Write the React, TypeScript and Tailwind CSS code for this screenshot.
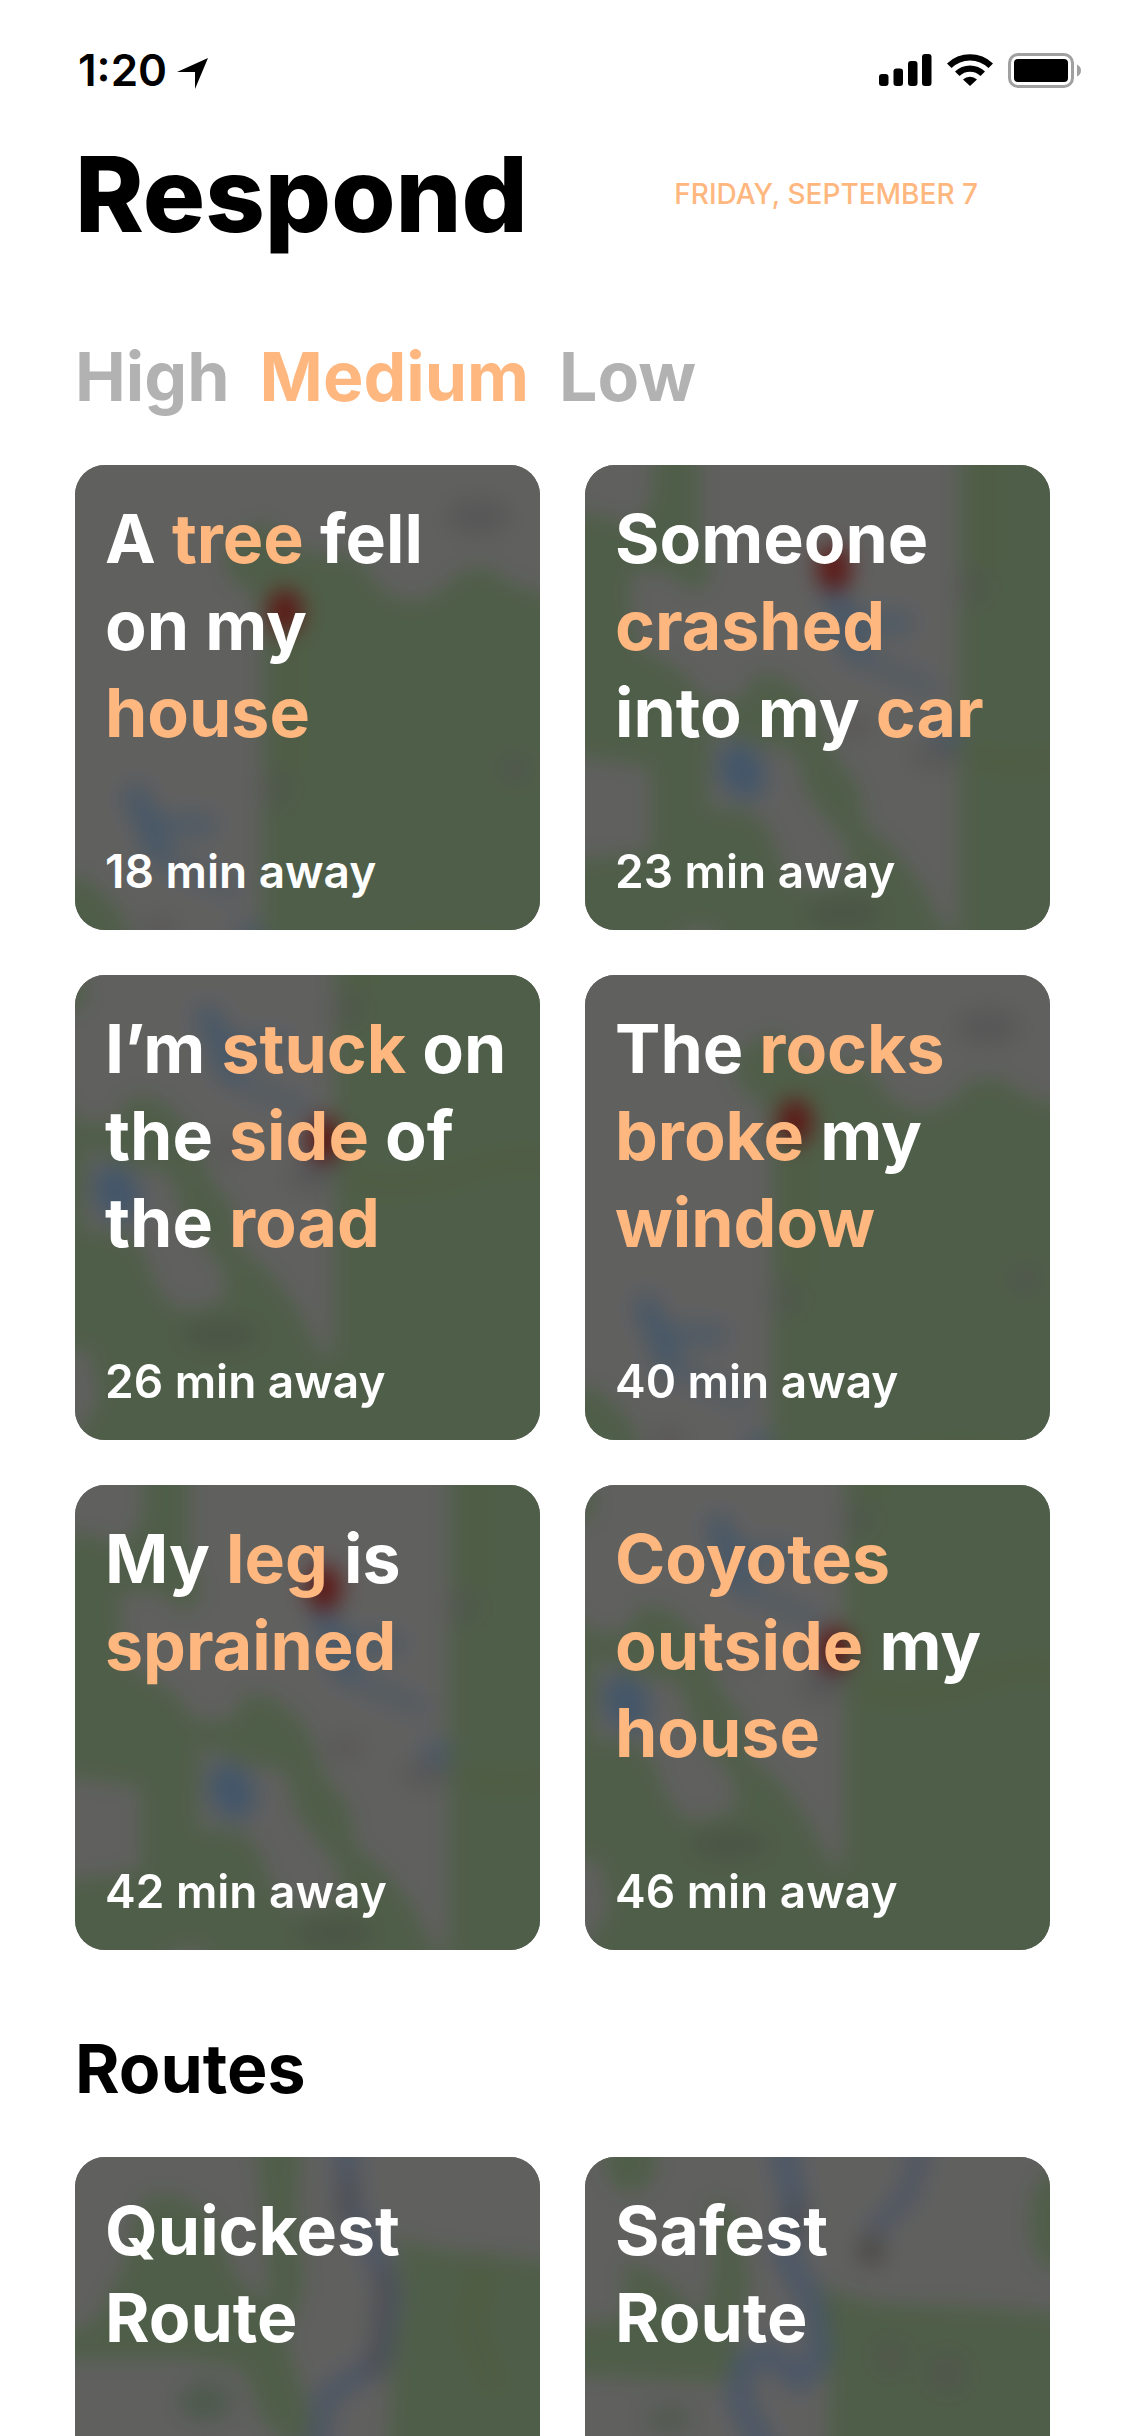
import React from 'react';

type Terrain = 'ridge' | 'valley' | 'canyon' | 'quickest' | 'safest';

interface Word {
  text: string;
  accent?: boolean;
}

interface Incident {
  lines: Word[][];
  minutes: number;
  terrain: Terrain;
}

const priorities = ['High', 'Medium', 'Low'];

const incidents: Incident[] = [
  {
    lines: [
      [{ text: 'A ' }, { text: 'tree', accent: true }, { text: ' fell' }],
      [{ text: 'on my' }],
      [{ text: 'house', accent: true }],
    ],
    minutes: 18,
    terrain: 'ridge',
  },
  {
    lines: [
      [{ text: 'Someone' }],
      [{ text: 'crashed', accent: true }],
      [{ text: 'into my ' }, { text: 'car', accent: true }],
    ],
    minutes: 23,
    terrain: 'valley',
  },
  {
    lines: [
      [{ text: 'I’m ' }, { text: 'stuck', accent: true }, { text: ' on' }],
      [{ text: 'the ' }, { text: 'side', accent: true }, { text: ' of' }],
      [{ text: 'the ' }, { text: 'road', accent: true }],
    ],
    minutes: 26,
    terrain: 'canyon',
  },
  {
    lines: [
      [{ text: 'The ' }, { text: 'rocks', accent: true }],
      [{ text: 'broke', accent: true }, { text: ' my' }],
      [{ text: 'window', accent: true }],
    ],
    minutes: 40,
    terrain: 'ridge',
  },
  {
    lines: [
      [{ text: 'My ' }, { text: 'leg', accent: true }, { text: ' is' }],
      [{ text: 'sprained', accent: true }],
    ],
    minutes: 42,
    terrain: 'valley',
  },
  {
    lines: [
      [{ text: 'Coyotes', accent: true }],
      [{ text: 'outside', accent: true }, { text: ' my' }],
      [{ text: 'house', accent: true }],
    ],
    minutes: 46,
    terrain: 'canyon',
  },
];

const GREEN = '#4f5e48';
const GRAY = '#60605f';
const BLUE = '#43566a';

const area = (
  <>
    <path
      fill={GREEN}
      d="M374 600V-45L365-72 339-90 336-125 379-147 405-117 472-110 492-77 525-64 555-77 572-97 602-100 622-84 700-60V600Z"
    />
    <path
      fill={GREEN}
      d="M-40 44 20 50 50 62 68 30V-30H114V60L128 115 108 128 85 108 48 105 44 125 52 180 100 208 120 236 160 234 166 208 200 212 232 242 250 292 275 322 280 362 305 380 336 418 362 470 400 470V600H-40V398L66 386V302L-40 288Z"
    />
    <path fill={GRAY} d="M126 258 160 276 210 286 222 330 262 380 268 412 220 425 196 400 184 362 160 344 122 344Z" />
    <path fill={GRAY} d="M90 468 128 460 140 510 110 560H90Z" />
    <path fill="none" stroke={BLUE} strokeWidth="24" strokeLinecap="round" opacity="0.85" d="M248 130 262 160 270 184" />
    <path fill="none" stroke={BLUE} strokeWidth="22" strokeLinecap="round" opacity="0.6" d="M274 158H318" />
    <path fill="none" stroke={BLUE} strokeWidth="18" strokeLinecap="round" opacity="0.45" d="M275 192 320 212 345 222" />
    <ellipse cx="157" cy="306" rx="22" ry="29" fill={BLUE} transform="rotate(-25 157 306)" />
    <circle cx="362" cy="270" r="16" fill={BLUE} opacity="0.6" />
    <ellipse cx="350" cy="290" rx="24" ry="14" fill="#505050" opacity="0.5" />
    <ellipse cx="388" cy="122" rx="16" ry="16" fill="#505050" opacity="0.5" />
    <ellipse cx="270" cy="262" rx="18" ry="12" fill="#525050" opacity="0.5" />
    <ellipse cx="260" cy="448" rx="40" ry="14" fill="#4a5146" opacity="0.8" />
    <ellipse cx="590" cy="-150" rx="32" ry="18" fill="#525151" opacity="0.6" />
    <ellipse cx="627" cy="102" rx="16" ry="12" fill="#505550" />
    <path fill="none" stroke="#505a3c" strokeWidth="12" opacity="0.5" d="M400-30V100M385 290Q440 310 520 280T700 340" />
  </>
);

const quickestArea = (
  <>
    <path fill={GREEN} d="M180-20H226L222 60 230 130 210 180 225 225 245 290H215L185 260 170 212 110 202H-20V178L20 166 48 110 66 40 100 36 140 60 160 120 195 150 190 70Z" />
    <path fill={GREEN} d="M322 74 350 90 410 96 500 108V500H300L318 200 328 140Z" />
    <path fill="none" stroke="#4e5a3e" strokeWidth="14" opacity="0.6" d="M410 100 395 170 420 230" />
    <ellipse cx="130" cy="245" rx="28" ry="20" fill="#4e5a4d" />
    <path fill="none" stroke="#4a5566" strokeWidth="22" opacity="0.85" d="M270-20 274 50 298 90 316 136 306 203 250 240 240 300" />
    <path fill="none" stroke="#484a4c" strokeWidth="16" opacity="0.7" d="M272 20 270 66M312 110 300 220" />
  </>
);

const safestArea = (
  <>
    <ellipse cx="46" cy="6" rx="26" ry="30" fill={GREEN} />
    <path fill={GREEN} d="M40 100 90 130 118 170 130 110 122 40 150 50 165 130 150 180 160 222 120 226-20 218V170L40 160Z" />
    <path fill={GREEN} d="M230 128 290 146 400 150 500 158V500H236L245 220Z" />
    <ellipse cx="470" cy="64" rx="26" ry="50" fill={GREEN} />
    <ellipse cx="362" cy="216" rx="20" ry="20" fill="#50564c" />
    <ellipse cx="306" cy="200" rx="16" ry="16" fill="#50564c" />
    <ellipse cx="84" cy="262" rx="26" ry="16" fill="#535b51" />
    <path fill="none" stroke="#475569" strokeWidth="22" opacity="0.9" d="M196-20 211 56 200 96 230 150 236 200 214 222 185 196 158 206 154 243 184 300" />
    <path fill="none" stroke="#4a5364" strokeWidth="18" opacity="0.85" d="M340-20 322 40 286 76" />
    <ellipse cx="286" cy="94" rx="12" ry="15" fill="#484642" />
    <ellipse cx="212" cy="62" rx="10" ry="20" fill="#48494e" opacity="0.8" />
  </>
);

const terrains = {
  ridge: { shift: 'translate(-187 202)', pin: [210, 147], shapes: area },
  valley: { shift: 'translate(0 0)', pin: [249, 103], shapes: area },
  canyon: { shift: 'translate(-115 -88)', pin: [249, 165], shapes: area },
  quickest: { shift: 'translate(0 0)', pin: null, shapes: quickestArea },
  safest: { shift: 'translate(0 0)', pin: null, shapes: safestArea },
};

const BlurredMap = ({ terrain }: { terrain: Terrain }) => {
  const id = React.useId();
  const { shift, pin, shapes } = terrains[terrain];

  return (
    <svg viewBox="0 0 465 465" preserveAspectRatio="xMidYMid slice" className="absolute inset-0 h-full w-full" aria-hidden="true">
      <filter id={id} filterUnits="userSpaceOnUse" x="-40" y="-40" width="545" height="545" colorInterpolationFilters="sRGB">
        <feGaussianBlur stdDeviation="11" />
      </filter>
      <rect width="465" height="465" fill={GRAY} />
      <g filter={`url(#${id})`}>
        <rect x="-60" y="-60" width="585" height="585" fill={GRAY} />
        <g transform={shift}>{shapes}</g>
        {pin && <ellipse cx={pin[0]} cy={pin[1]} rx="17" ry="23" fill="#5c1613" />}
      </g>
    </svg>
  );
};

interface MapCardProps {
  lines: Word[][];
  footer?: string;
  terrain: Terrain;
}

const MapCard = ({ lines, footer, terrain }: MapCardProps) => (
  <a href="#" className="relative flex aspect-square flex-col justify-between overflow-hidden rounded-[30px] p-[30px] text-white">
    <BlurredMap terrain={terrain} />
    <h3 className="relative text-[68px] leading-[87px] font-bold whitespace-nowrap">
      {lines.map((words, i) => (
        <span key={i} className="block">
          {words.map((word) => (
            <span key={word.text} className={word.accent ? 'text-[#ffb780]' : ''}>
              {word.text}
            </span>
          ))}
        </span>
      ))}
    </h3>
    {footer && <p className="relative text-[46px] leading-[58px] font-semibold">{footer}</p>}
  </a>
);

const StatusBar = () => (
  <div className="flex h-34 items-center justify-between pt-1 pr-11 pl-[78px]">
    <div className="flex items-center gap-2.5">
      <span className="text-[44px] leading-[60px] font-semibold">1:20</span>
      <svg width="32" height="32" viewBox="0 0 32 32" className="mt-2" aria-hidden="true">
        <path d="M0 14 31 0 18 31V14Z" />
      </svg>
    </div>
    <div className="flex items-center gap-[15px]">
      <svg width="53" height="32" viewBox="0 0 53 32" aria-hidden="true">
        <rect y="20" width="9.500" height="12" rx="3" />
        <rect x="14.500" y="14.500" width="9.500" height="17.500" rx="3" />
        <rect x="29" y="7" width="9.500" height="25" rx="3" />
        <rect x="43" width="9.500" height="32" rx="3" />
      </svg>
      <svg width="46" height="32" viewBox="0 0 46 32" aria-hidden="true">
        <path d="M0 9.500A33 33 0 0 1 46 9.500L41.500 14A26.500 26.500 0 0 0 4.500 14Z" />
        <path d="M8 17.500A21.500 21.500 0 0 1 38 17.500L33.500 22A15 15 0 0 0 12.500 22Z" />
        <path d="M16 25.500A10 10 0 0 1 30 25.500L23 32Z" />
      </svg>
      <svg width="73" height="35" viewBox="0 0 73 35" aria-hidden="true">
        <rect x="1.500" y="1.500" width="63" height="32" rx="8.500" fill="none" stroke="#a0a0a0" strokeWidth="3" />
        <rect x="6" y="6" width="54" height="23" rx="4" />
        <path d="M69 11.500Q73 13.500 73 17.500T69 23.500Z" fill="#a0a0a0" />
      </svg>
    </div>
  </div>
);

export default function App() {
  const [selected, setSelected] = React.useState('Medium');

  return (
    <div className="h-screen overflow-hidden bg-white font-['Inter',sans-serif] text-black">
      <StatusBar />
      <main className="px-[75px]">
        <header className="flex items-center justify-between pr-[72px]">
          <h1 className="text-[104px] leading-[116px] font-extrabold">Respond</h1>
          <p className="text-[28px] leading-[36px] font-medium text-[#ffb780]">FRIDAY, SEPTEMBER 7</p>
        </header>

        <div className="mt-[81px] flex gap-[30px]">
          {priorities.map((priority) => (
            <button
              key={priority}
              type="button"
              aria-pressed={priority === selected}
              onClick={() => setSelected(priority)}
              className={`text-[68px] leading-[87px] font-bold ${priority === selected ? 'text-[#ffb780]' : 'text-[#b2b2b2]'}`}
            >
              {priority}
            </button>
          ))}
        </div>

        <section className="mt-[45px] grid grid-cols-2 gap-[45px]">
          {incidents.map((incident) => (
            <MapCard
              key={incident.minutes}
              lines={incident.lines}
              footer={`${incident.minutes} min away`}
              terrain={incident.terrain}
            />
          ))}
        </section>

        <h2 className="mt-[75px] text-[68px] leading-[87px] font-bold">Routes</h2>
        <section className="mt-[45px] grid grid-cols-2 gap-[45px]">
          <MapCard lines={[[{ text: 'Quickest' }], [{ text: 'Route' }]]} terrain="quickest" />
          <MapCard lines={[[{ text: 'Safest' }], [{ text: 'Route' }]]} terrain="safest" />
        </section>
      </main>
    </div>
  );
}
